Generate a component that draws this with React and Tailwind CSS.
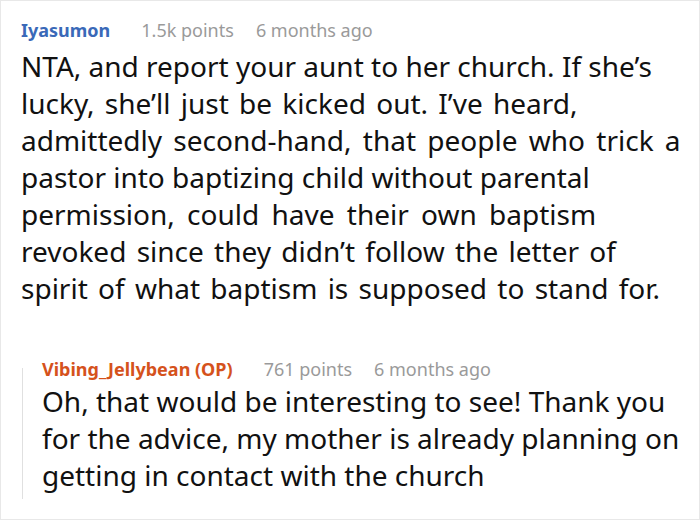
import React from 'react'

// lines of the reference wrap; the spacing class nudges each one to the width it has there
const main = {
  user: 'Iyasumon',
  points: '1.5k points',
  time: '6 months ago',
  lines: [
    ['NTA, and report your aunt to her church. If she’s', ''],
    ['lucky, she’ll just be kicked out. I’ve heard,', '[word-spacing:3px]'],
    ['admittedly second-hand, that people who trick a', '[word-spacing:4px]'],
    ['pastor into baptizing child without parental', ''],
    ['permission, could have their own baptism', '[word-spacing:5px]'],
    ['revoked since they didn’t follow the letter of', '[word-spacing:3px]'],
    ['spirit of what baptism is supposed to stand for.', '[word-spacing:3px]'],
  ],
}

const reply = {
  user: 'Vibing_Jellybean (OP)',
  points: '761 points',
  time: '6 months ago',
  lines: [
    ['Oh, that would be interesting to see! Thank you', ''],
    ['for the advice, my mother is already planning on', ''],
    ['getting in contact with the church', ''],
  ],
}

function Meta({ user, points, time, userClass }) {
  return (
    <div className="flex items-center text-[18px] leading-[26px] whitespace-nowrap">
      <span className={`font-bold ${userClass}`}>{user}</span>
      <span className="ml-[31px] text-[#9a9a9a]">{points}</span>
      <span className="ml-[22px] text-[#9a9a9a]">{time}</span>
    </div>
  )
}

function Body({ lines, className }) {
  return (
    <div className={`text-[28px] leading-[37px] whitespace-nowrap ${className}`}>
      {lines.map(([line, spacing]) => (
        <p key={line} className={spacing}>{line}</p>
      ))}
    </div>
  )
}

export default function App() {
  return (
    <div className="w-[700px] h-[520px] overflow-hidden bg-white border border-[#e8e8e8] pl-[20px] pt-[16px] text-[#111] font-['Noto_Sans','Open_Sans',sans-serif]">
      {/* Top comment */}
      <Meta {...main} userClass="text-[#3a69b8]" />
      <Body lines={main.lines} className="mt-[5px]" />

      {/* Reply */}
      <div className="flex mt-[49px]">
        <div className="ml-[1px] w-[1px] bg-[#e0e0e0] mt-[12px] mb-[-5px]" />
        <div className="pl-[19px]">
          <Meta {...reply} userClass="text-[#d5521c]" />
          <Body lines={reply.lines} className="mt-[1px]" />
        </div>
      </div>
    </div>
  )
}
